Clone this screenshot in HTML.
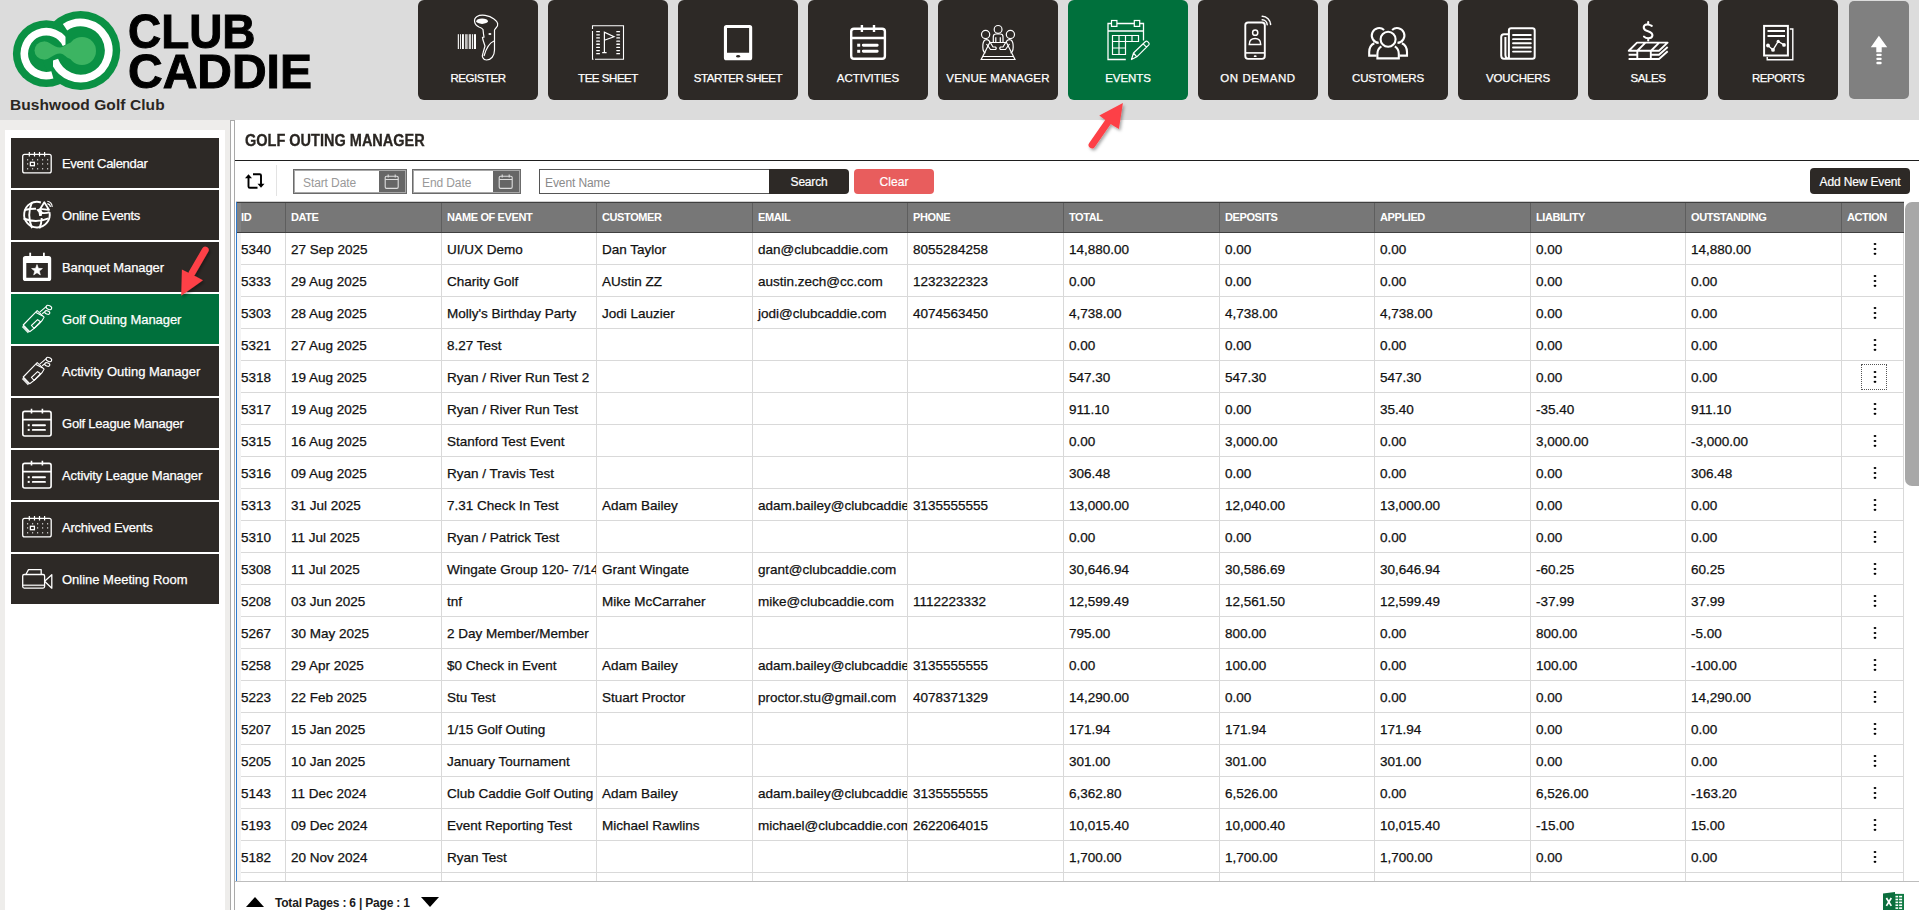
<!DOCTYPE html>
<html><head><meta charset="utf-8"><title>Golf Outing Manager</title>
<style>
*{box-sizing:border-box}
html,body{margin:0;padding:0}
body{width:1919px;height:910px;overflow:hidden;position:relative;background:#fff;font-family:"Liberation Sans",sans-serif;color:#000}
.a{position:absolute}
#hdr{left:0;top:0;width:1919px;height:120px;background:#dcdcdc}
.nb{position:absolute;top:0;width:120px;height:100px;background:#2d2926;border-radius:6px;color:#fff}
.nb.on{background:#00703c}
.nb .lb{position:absolute;left:0;right:0;top:70px;-webkit-text-stroke:0.25px #fff;text-align:center;font-size:11.5px;line-height:16px;letter-spacing:-0.45px;white-space:nowrap}
.nb svg{position:absolute;left:0;top:0}
#side{left:0;top:120px;width:230px;height:790px;background:#eeedeb}
#sidep{left:5px;top:130px;width:220px;height:780px;background:#fff}
.si{position:absolute;left:11px;width:208px;height:50px;background:#2d2926;color:#fff}
.si.on{background:#00703c}
.si .lb{position:absolute;left:51px;top:17px;-webkit-text-stroke:0.25px #fff;font-size:13px;line-height:18px;letter-spacing:-0.3px;white-space:nowrap}
.si svg{position:absolute;left:0;top:0}
.hc{position:absolute;top:203px;height:29px;color:#fff;font-weight:bold;font-size:11px;line-height:29px;padding-left:5px;letter-spacing:-0.4px;border-left:1px solid #5e5e5e;white-space:nowrap;overflow:hidden}
.rw{position:absolute;left:236px;width:1668px;height:32px;border-bottom:1px solid #d9d9d9}
.c{position:absolute;top:0;height:31px;line-height:33px;font-size:13.5px;padding-left:5px;-webkit-text-stroke:0.25px #111;border-left:1px solid #d9d9d9;white-space:nowrap;overflow:hidden;color:#111}
</style></head><body>

<div id="hdr" class="a">
<svg class="a" style="left:0;top:0" width="125" height="95" viewBox="0 0 125 95"><circle cx="46.3" cy="53.7" r="33.4" fill="#0a9144"/><circle cx="80.7" cy="50.5" r="39.5" fill="#0a9144"/><defs><clipPath id="cl"><rect x="0" y="0" width="65.5" height="95"/></clipPath><clipPath id="cr"><rect x="53" y="0" width="80" height="95"/></clipPath></defs><path clip-path="url(#cl)" d="M52.36 74.85 A22 22 0 1 1 66.24 44.40" fill="none" stroke="#fff" stroke-width="7.6"/><path clip-path="url(#cr)" d="M65.04 27.29 A28 28 0 1 1 54.39 60.08" fill="none" stroke="#fff" stroke-width="7.8"/><circle cx="43.5" cy="50.5" r="9" fill="#3cb462"/><circle cx="82" cy="51" r="14" fill="#3cb462"/><path d="M44 41.6 C50 41 53 47.5 60 47.5 C64 47.5 67 43 72 42.5 L72 59.5 C67 59 64 53.5 60 53.5 C53 53.5 50 60 44 59.4 Z" fill="#3cb462"/></svg>
<div class="a" style="left:127.5px;top:6px;font-weight:bold;font-size:48.5px;line-height:50px;color:#000;transform:scaleX(0.946);transform-origin:0 0;-webkit-text-stroke:1px #000">CLUB</div>
<div class="a" style="left:128px;top:46px;font-weight:bold;font-size:48.5px;line-height:50px;color:#000;transform:scaleX(0.989);transform-origin:0 0;-webkit-text-stroke:1px #000">CADDIE</div>
<div class="a" style="left:10px;top:96px;font-weight:bold;font-size:15.5px;line-height:18px;color:#2a2622;letter-spacing:0.08px">Bushwood Golf Club</div>
<div class="nb" style="left:418px"><svg width="120" height="100" viewBox="0 0 120 100" style=""><rect x="39.8" y="34.2" width="1.1" height="14.8" fill="#fff"/><rect x="42" y="34.2" width="0.9" height="14.8" fill="#fff"/><rect x="44" y="34.2" width="1.9" height="14.8" fill="#fff"/><rect x="47" y="34.2" width="2.7" height="14.8" fill="#fff" opacity=".7"/><rect x="50.7" y="34.2" width="2.4" height="14.8" fill="#fff" opacity=".8"/><rect x="54" y="34.2" width="0.9" height="14.8" fill="#fff"/><rect x="55.9" y="34.2" width="2.1" height="14.8" fill="#fff"/><path d="M61 27 C56 25 55 19 59 16.5 C63 14 71 15 76 19 C80 22 81 25 78 28 L76.5 30 L76.5 50 C76.5 56 73 60 68.5 60 C65 60 63.5 56.5 65 53 L67 46 L65 40 L64.5 37.5 L66 37 L65.5 34 L65 29.5 C64 28 62.5 27.5 61 27 Z" fill="none" stroke="#fff" stroke-width="1.2"/><path d="M76 41 C71 43 68 49 66 56" fill="none" stroke="#fff" stroke-width="1.2"/><ellipse cx="64.1" cy="21.2" rx="5.8" ry="2.7" fill="#fff"/><ellipse cx="71.9" cy="33.9" rx="1.5" ry="1" fill="#fff"/></svg><div class="lb" style="letter-spacing:-0.45px">REGISTER</div></div>
<div class="nb" style="left:548px"><svg width="120" height="100" viewBox="0 0 120 100" style=""><path d="M44.5 29 L44.5 25.7 L75.5 25.7 L75.5 59.3 L47 59.3 M44.5 31 L44.5 59.3 L45.5 59.3" fill="none" stroke="#fff" stroke-width="1.1"/><rect x="48.1" y="31.00" width="3.9" height="1.3" rx=".6" fill="#fff"/><rect x="68.2" y="31.00" width="3.9" height="1.3" rx=".6" fill="#fff"/><rect x="48.1" y="34.15" width="3.9" height="1.3" rx=".6" fill="#fff"/><rect x="68.2" y="34.15" width="3.9" height="1.3" rx=".6" fill="#fff"/><rect x="48.1" y="37.30" width="3.9" height="1.3" rx=".6" fill="#fff"/><rect x="68.2" y="37.30" width="3.9" height="1.3" rx=".6" fill="#fff"/><rect x="48.1" y="40.45" width="3.9" height="1.3" rx=".6" fill="#fff"/><rect x="68.2" y="40.45" width="3.9" height="1.3" rx=".6" fill="#fff"/><rect x="48.1" y="43.60" width="3.9" height="1.3" rx=".6" fill="#fff"/><rect x="68.2" y="43.60" width="3.9" height="1.3" rx=".6" fill="#fff"/><rect x="48.1" y="46.75" width="3.9" height="1.3" rx=".6" fill="#fff"/><rect x="68.2" y="46.75" width="3.9" height="1.3" rx=".6" fill="#fff"/><rect x="48.1" y="49.90" width="3.9" height="1.3" rx=".6" fill="#fff"/><rect x="68.2" y="49.90" width="3.9" height="1.3" rx=".6" fill="#fff"/><rect x="48.1" y="53.05" width="3.9" height="1.3" rx=".6" fill="#fff"/><rect x="68.2" y="53.05" width="3.9" height="1.3" rx=".6" fill="#fff"/><path d="M56.4 52.6 L56.4 32.3 L66 36.7 L56.4 40.3 M54.2 52.6 L58.6 52.6" fill="none" stroke="#fff" stroke-width="1.2"/></svg><div class="lb" style="letter-spacing:-0.45px">TEE SHEET</div></div>
<div class="nb" style="left:678px"><svg width="120" height="100" viewBox="0 0 120 100" style=""><path fill="#fff" fill-rule="evenodd" d="M48.5 24.9 H71.6 A2.6 2.6 0 0 1 74.2 27.5 V57.7 A2.6 2.6 0 0 1 71.6 60.3 H48.5 A2.6 2.6 0 0 1 45.9 57.7 V27.5 A2.6 2.6 0 0 1 48.5 24.9 Z M49 27.9 V52.8 H71.1 V27.9 Z"/><ellipse cx="60.1" cy="56.3" rx="2" ry="1.2" fill="#2d2926"/></svg><div class="lb" style="letter-spacing:-0.45px">STARTER SHEET</div></div>
<div class="nb" style="left:808px"><svg width="120" height="100" viewBox="0 0 120 100" style=""><rect x="43.2" y="28.8" width="33.7" height="30" rx="2.8" fill="none" stroke="#fff" stroke-width="2.4"/><path d="M43.2 38 H76.9 M53.9 25 V32 M66 25 V32" fill="none" stroke="#fff" stroke-width="2.4"/><rect x="49.2" y="43.7" width="3" height="3" fill="#fff"/><rect x="49.2" y="49.8" width="3" height="3" fill="#fff"/><path d="M55.3 45.2 H69.2 M55.3 51.3 H69.2" fill="none" stroke="#fff" stroke-width="2.9" stroke-linecap="round"/></svg><div class="lb" style="letter-spacing:-0.03px">ACTIVITIES</div></div>
<div class="nb" style="left:938px"><svg width="120" height="100" viewBox="0 0 120 100" style=""><g fill="none" stroke="#fff" stroke-width="1.2"><circle cx="60.1" cy="29.4" r="3.9"/><circle cx="47.6" cy="34.5" r="4.1"/><circle cx="72.4" cy="34.5" r="4.1"/><path d="M55.3 42.5 V36.8 Q55.3 34 58 34 H62.3 Q65 34 65 36.8 V42.5 M57.8 42.5 V37.3 M62.3 42.5 V37.3"/><path d="M51.7 42.5 H68.5 L77 59.5 H43.2 Z M44.4 56.5 H75.6"/><path d="M47.5 53 C44 52 44 42 47 40 C49 39 51 40 52 42 L55 47 H57.5 Q59 48.3 57.5 49.5 H52.5 L48.5 44"/><path d="M72.5 53 C76 52 76 42 73 40 C71 39 69 40 68 42 L65 47 H62.5 Q61 48.3 62.5 49.5 H67.5 L71.5 44"/></g></svg><div class="lb" style="letter-spacing:0.19px">VENUE MANAGER</div></div>
<div class="nb on" style="left:1068px"><svg width="120" height="100" viewBox="0 0 120 100" style=""><path d="M57.8 59.5 H40 V23.5 H75.5 V40.5 M40 31 H75.5" fill="none" stroke="#fff" stroke-width="1.3"/><rect x="43.5" y="20.5" width="5.4" height="5.9" fill="#00703c" stroke="#fff" stroke-width="1.2"/><rect x="66.3" y="20.5" width="5.4" height="5.9" fill="#00703c" stroke="#fff" stroke-width="1.2"/><path d="M44.5 35.5 H70.5 V41.5 H44.5 Z M44.5 41.5 V54.5 H57.5 V41.5 M51 35.5 V54.5 M57.5 35.5 V41.5 M64 35.5 V41.5 M44.5 48 H57.5" fill="none" stroke="#fff" stroke-width="1.2"/><path d="M63.5 59.5 L65.5 53 L77.5 41.5 Q78.5 40.7 79.6 41.6 L80.8 42.8 Q81.6 43.8 80.8 44.8 L68.8 56.8 Z M65.5 53 L68.8 56.8 M75.2 43.8 L78.5 47.2" fill="none" stroke="#fff" stroke-width="1.2" stroke-linejoin="round"/></svg><div class="lb" style="letter-spacing:-0.05px">EVENTS</div></div>
<div class="nb" style="left:1198px"><svg width="120" height="100" viewBox="0 0 120 100" style=""><rect x="47.3" y="22.5" width="19.5" height="36.4" rx="2.8" fill="none" stroke="#fff" stroke-width="1.9"/><path d="M47.3 52.9 H66.8" fill="none" stroke="#fff" stroke-width="1.6"/><ellipse cx="57.2" cy="56.2" rx="1.5" ry=".9" fill="#fff"/><circle cx="57.2" cy="32.7" r="2.6" fill="none" stroke="#fff" stroke-width="1.5"/><path d="M51.3 44.4 Q51.3 38.6 57.1 38.6 Q62.7 38.6 62.7 44.4 Z" fill="none" stroke="#fff" stroke-width="1.5"/><path d="M64.2 16.2 A8.7 8.7 0 0 1 72.6 24.5 M64.2 19.8 A5.2 5.2 0 0 1 69.2 24.8" fill="none" stroke="#fff" stroke-width="1.5" stroke-linecap="round"/></svg><div class="lb" style="letter-spacing:0.56px">ON DEMAND</div></div>
<div class="nb" style="left:1328px"><svg width="120" height="100" viewBox="0 0 120 100" style=""><g fill="none" stroke="#fff" stroke-width="2.1"><path d="M50.68 42.88 A7.4 7.4 0 1 1 56.08 29.94"/><path d="M69.52 42.88 A7.4 7.4 0 1 0 64.12 29.94"/><path d="M46.3 43.2 C42.5 45 41.2 48.5 41.2 52 V55.6 H48.6"/><path d="M73.9 43.2 C77.7 45 79 48.5 79 52 V55.6 H71.6"/><circle cx="60.1" cy="39.2" r="7.5"/><path d="M53.4 46.3 C50.5 48 49.4 51 49.4 54 V58.4 H70.8 V54 C70.8 51 69.7 48 66.8 46.3"/></g></svg><div class="lb" style="letter-spacing:-0.15px">CUSTOMERS</div></div>
<div class="nb" style="left:1458px"><svg width="120" height="100" viewBox="0 0 120 100" style=""><path d="M50.9 58.7 V30.5 Q50.9 28.2 53.2 28.2 H74.4 Q76.7 28.2 76.7 30.5 V56.4 Q76.7 58.7 74.4 58.7 H46 Q43.2 58.7 43.2 55.5 V37 Q43.2 34.2 46 34.2 H50.9 M50.9 58.7 Q47.6 58.7 47.4 55 V37" fill="none" stroke="#fff" stroke-width="2"/><path d="M55 35.00 H72.8" fill="none" stroke="#fff" stroke-width="1.9" stroke-linecap="round"/><path d="M55 39.15 H72.8" fill="none" stroke="#fff" stroke-width="1.9" stroke-linecap="round"/><path d="M55 43.30 H72.8" fill="none" stroke="#fff" stroke-width="1.9" stroke-linecap="round"/><path d="M55 47.45 H72.8" fill="none" stroke="#fff" stroke-width="1.9" stroke-linecap="round"/><path d="M55 51.60 H72.8" fill="none" stroke="#fff" stroke-width="1.9" stroke-linecap="round"/></svg><div class="lb" style="letter-spacing:-0.16px">VOUCHERS</div></div>
<div class="nb" style="left:1588px"><svg width="120" height="100" viewBox="0 0 120 100" style=""><path d="M63.8 25.8 Q60.8 24 58 24.6 Q55.5 25.4 55.8 28 Q56.3 30.2 60 31.2 Q64.7 32.6 64.4 35.6 Q64 38.2 60.3 38.3 Q57.6 38.3 56 36.6 M60.2 22 V24.4 M60.2 38.3 V40.5" fill="none" stroke="#fff" stroke-width="2.1" stroke-linecap="round"/><path d="M49 42.6 H79.6 L71 50.7 H40.8 Z M40.8 50.7 V51.5 M57.5 42.6 L49.3 50.7 M71.2 42.6 L63 50.7" fill="none" stroke="#fff" stroke-width="1.9" stroke-linejoin="round"/><path d="M40.6 54.8 H49.3 M62.8 54.8 H71 L79.7 47 M40.6 59 H71 L79.7 51.2 M49.3 50.7 V59 M62.8 50.7 V59" fill="none" stroke="#fff" stroke-width="1.9"/></svg><div class="lb" style="letter-spacing:-0.45px">SALES</div></div>
<div class="nb" style="left:1718px"><svg width="120" height="100" viewBox="0 0 120 100" style=""><rect x="46.1" y="25.9" width="23.8" height="29.6" fill="none" stroke="#fff" stroke-width="2"/><path d="M71.8 29 H74.8 V59.8 H49.2 V57" fill="none" stroke="#fff" stroke-width="1.4"/><path d="M49.5 31 H67 M49.5 36 H67" fill="none" stroke="#fff" stroke-width="2"/><path d="M50 45.5 L55 49.9 L60.2 41.4 L66 44.9" fill="none" stroke="#fff" stroke-width="1.3"/><circle cx="50" cy="45.5" r="1.9" fill="#fff"/><circle cx="55" cy="49.9" r="1.9" fill="#fff"/><circle cx="60.2" cy="41.4" r="1.6" fill="#fff"/><circle cx="66" cy="44.9" r="1.9" fill="#fff"/></svg><div class="lb" style="letter-spacing:-0.45px">REPORTS</div></div>
<div class="a" style="left:1849px;top:1px;width:60px;height:98px;background:#808080;border-radius:5px"><svg class="a" style="left:0;top:0" width="60" height="98" viewBox="0 0 60 98"><path d="M29.9 34.7 L38.2 46.3 H32.7 V51.2 H27.3 V46.3 H21.8 Z" fill="#fff"/><rect x="27.3" y="52.8" width="5.4" height="2.2" rx="1" fill="#fff"/><rect x="27.3" y="56.8" width="5.4" height="2.2" rx="1" fill="#fff"/><rect x="27.3" y="60.8" width="5.4" height="2.4" rx="1.2" fill="#fff"/></svg></div>
</div>
<div id="side" class="a"></div><div id="sidep" class="a"></div>
<div class="si" style="top:138px"><svg width="50" height="50" viewBox="0 0 50 50" style=""><rect x="11.7" y="16.3" width="28.5" height="18.6" rx="2" fill="none" stroke="#fff" stroke-width="1.3"/><path d="M18.3 14 V18.5 M23.5 14 V18.5 M28.5 14 V18.5 M33.6 14 V18.5" fill="none" stroke="#fff" stroke-width="1.2"/><rect x="16.0" y="21.2" width="1.2" height="1.2" fill="#fff" opacity=".85"/><rect x="21.0" y="21.2" width="1.2" height="1.2" fill="#fff" opacity=".85"/><rect x="26.0" y="21.2" width="1.2" height="1.2" fill="#fff" opacity=".85"/><rect x="31.0" y="21.2" width="1.2" height="1.2" fill="#fff" opacity=".85"/><rect x="36.0" y="21.2" width="1.2" height="1.2" fill="#fff" opacity=".85"/><rect x="16.0" y="25.3" width="1.2" height="1.2" fill="#fff" opacity=".85"/><rect x="26.0" y="25.3" width="1.2" height="1.2" fill="#fff" opacity=".85"/><rect x="31.0" y="25.3" width="1.2" height="1.2" fill="#fff" opacity=".85"/><rect x="36.0" y="25.3" width="1.2" height="1.2" fill="#fff" opacity=".85"/><rect x="16.0" y="30.2" width="1.2" height="1.2" fill="#fff" opacity=".85"/><rect x="21.0" y="30.2" width="1.2" height="1.2" fill="#fff" opacity=".85"/><rect x="26.0" y="30.2" width="1.2" height="1.2" fill="#fff" opacity=".85"/><rect x="31.0" y="30.2" width="1.2" height="1.2" fill="#fff" opacity=".85"/><rect x="36.0" y="30.2" width="1.2" height="1.2" fill="#fff" opacity=".85"/><rect x="19.4" y="24.3" width="4" height="3.4" fill="none" stroke="#fff" stroke-width="1.3"/></svg><div class="lb" style="letter-spacing:-0.3px">Event Calendar</div></div>
<div class="si" style="top:190px"><svg width="50" height="50" viewBox="0 0 50 50" style=""><g fill="none" stroke="#fff" stroke-width="1.9"><path d="M29.9 12.5 A12.8 12.8 0 1 0 38.5 22.2"/><path d="M21 12.2 Q15.5 25 21 38.2 M30.7 28 Q30.5 34 28.4 38.3 M13.8 20 Q19 18.6 25 18.8 M12.5 28.5 Q25 33.5 37.5 28.3 M31 23 Q35 23.5 38.6 22.2"/></g><path d="M33.3 12.3 L29.3 18.8 L38 19.8 Z" fill="none" stroke="#fff" stroke-width="1.8" stroke-linejoin="round"/><path d="M25.2 19.4 L29.6 18.3 L31.6 22.3 L30.6 25.9 L28.2 25.9 L27.6 22.4 Z" fill="#fff"/><path d="M36.3 13.6 A3.6 3.6 0 0 1 39.4 17 M36.3 11.3 A6 6 0 0 1 41.2 17" fill="none" stroke="#fff" stroke-width="1.1"/></svg><div class="lb" style="letter-spacing:-0.22px">Online Events</div></div>
<div class="si" style="top:242px"><svg width="50" height="50" viewBox="0 0 50 50" style=""><path fill="#fff" fill-rule="evenodd" d="M14.5 14 H37.6 Q40.2 14 40.2 16.6 V36.4 Q40.2 39 37.6 39 H14.5 Q11.9 39 11.9 36.4 V16.6 Q11.9 14 14.5 14 Z M15.3 21.1 V35.7 H36.9 V21.1 Z"/><rect x="18.3" y="10.7" width="1.8" height="4" fill="#fff"/><rect x="32" y="10.7" width="1.8" height="4" fill="#fff"/><path d="M26.00 22.60 L27.41 26.36 L31.42 26.54 L28.28 29.04 L29.35 32.91 L26.00 30.70 L22.65 32.91 L23.72 29.04 L20.58 26.54 L24.59 26.36 Z" fill="#fff" stroke="#fff" stroke-width=".6" stroke-linejoin="round"/></svg><div class="lb" style="letter-spacing:-0.09px">Banquet Manager</div></div>
<div class="si on" style="top:294px"><svg width="50" height="50" viewBox="0 0 50 50" style=""><g fill="none" stroke="#fff" stroke-width="1.1" stroke-linejoin="round"><path d="M12.2 31 L26.2 16.6 L33.1 23.1 C31 28 24 34 18.7 37.7 Z"/><path d="M20.4 31.5 L26.6 25.6 L29.5 27.7 L23.1 34.4 Z"/><path d="M25 18.5 L31.6 21.9 M28.7 18.1 L35.2 12.6 M31.2 19.8 L34 17.6"/><ellipse cx="37.9" cy="13.5" rx="2.9" ry="1.9" transform="rotate(25 37.9 13.5)"/><ellipse cx="36.3" cy="18.5" rx="2.6" ry="1.7" transform="rotate(20 36.3 18.5)"/></g><path d="M11.6 32.3 L17.6 38.4" fill="none" stroke="#fff" stroke-width="2.2" opacity=".85"/></svg><div class="lb" style="letter-spacing:-0.07px">Golf Outing Manager</div></div>
<div class="si" style="top:346px"><svg width="50" height="50" viewBox="0 0 50 50" style=""><g fill="none" stroke="#fff" stroke-width="1.1" stroke-linejoin="round"><path d="M12.2 31 L26.2 16.6 L33.1 23.1 C31 28 24 34 18.7 37.7 Z"/><path d="M20.4 31.5 L26.6 25.6 L29.5 27.7 L23.1 34.4 Z"/><path d="M25 18.5 L31.6 21.9 M28.7 18.1 L35.2 12.6 M31.2 19.8 L34 17.6"/><ellipse cx="37.9" cy="13.5" rx="2.9" ry="1.9" transform="rotate(25 37.9 13.5)"/><ellipse cx="36.3" cy="18.5" rx="2.6" ry="1.7" transform="rotate(20 36.3 18.5)"/></g><path d="M11.6 32.3 L17.6 38.4" fill="none" stroke="#fff" stroke-width="2.2" opacity=".85"/></svg><div class="lb" style="letter-spacing:0.02px">Activity Outing Manager</div></div>
<div class="si" style="top:398px"><svg width="50" height="50" viewBox="0 0 50 50" style=""><rect x="11.8" y="13.4" width="28.3" height="24.6" rx="2" fill="none" stroke="#fff" stroke-width="1.6"/><path d="M11.8 21.6 H40.1 M20.5 10.8 V15.5 M31.4 10.8 V15.5" fill="none" stroke="#fff" stroke-width="1.6"/><rect x="16.7" y="26.2" width="2" height="2" fill="#fff"/><rect x="16.7" y="30.9" width="2" height="2" fill="#fff"/><path d="M21.8 27.2 H34 M21.8 31.9 H34" fill="none" stroke="#fff" stroke-width="1.9" stroke-linecap="round"/></svg><div class="lb" style="letter-spacing:-0.22px">Golf League Manager</div></div>
<div class="si" style="top:450px"><svg width="50" height="50" viewBox="0 0 50 50" style=""><rect x="11.8" y="13.4" width="28.3" height="24.6" rx="2" fill="none" stroke="#fff" stroke-width="1.6"/><path d="M11.8 21.6 H40.1 M20.5 10.8 V15.5 M31.4 10.8 V15.5" fill="none" stroke="#fff" stroke-width="1.6"/><rect x="16.7" y="26.2" width="2" height="2" fill="#fff"/><rect x="16.7" y="30.9" width="2" height="2" fill="#fff"/><path d="M21.8 27.2 H34 M21.8 31.9 H34" fill="none" stroke="#fff" stroke-width="1.9" stroke-linecap="round"/></svg><div class="lb" style="letter-spacing:-0.13px">Activity League Manager</div></div>
<div class="si" style="top:502px"><svg width="50" height="50" viewBox="0 0 50 50" style=""><rect x="11.7" y="16.3" width="28.5" height="18.6" rx="2" fill="none" stroke="#fff" stroke-width="1.3"/><path d="M18.3 14 V18.5 M23.5 14 V18.5 M28.5 14 V18.5 M33.6 14 V18.5" fill="none" stroke="#fff" stroke-width="1.2"/><rect x="16.0" y="21.2" width="1.2" height="1.2" fill="#fff" opacity=".85"/><rect x="21.0" y="21.2" width="1.2" height="1.2" fill="#fff" opacity=".85"/><rect x="26.0" y="21.2" width="1.2" height="1.2" fill="#fff" opacity=".85"/><rect x="31.0" y="21.2" width="1.2" height="1.2" fill="#fff" opacity=".85"/><rect x="36.0" y="21.2" width="1.2" height="1.2" fill="#fff" opacity=".85"/><rect x="16.0" y="25.3" width="1.2" height="1.2" fill="#fff" opacity=".85"/><rect x="26.0" y="25.3" width="1.2" height="1.2" fill="#fff" opacity=".85"/><rect x="31.0" y="25.3" width="1.2" height="1.2" fill="#fff" opacity=".85"/><rect x="36.0" y="25.3" width="1.2" height="1.2" fill="#fff" opacity=".85"/><rect x="16.0" y="30.2" width="1.2" height="1.2" fill="#fff" opacity=".85"/><rect x="21.0" y="30.2" width="1.2" height="1.2" fill="#fff" opacity=".85"/><rect x="26.0" y="30.2" width="1.2" height="1.2" fill="#fff" opacity=".85"/><rect x="31.0" y="30.2" width="1.2" height="1.2" fill="#fff" opacity=".85"/><rect x="36.0" y="30.2" width="1.2" height="1.2" fill="#fff" opacity=".85"/><rect x="19.4" y="24.3" width="4" height="3.4" fill="none" stroke="#fff" stroke-width="1.3"/></svg><div class="lb" style="letter-spacing:-0.23px">Archived Events</div></div>
<div class="si" style="top:554px"><svg width="50" height="50" viewBox="0 0 50 50" style=""><g fill="none" stroke="#fff" stroke-width="1.3" stroke-linejoin="round"><path d="M15 20.2 L17.5 15.6 H30.2 V20.2"/><rect x="11.7" y="20.5" width="21.9" height="13.6" rx="1.5"/><path d="M33.6 27.2 L40.8 20.8 V34.2 Z"/></g><rect x="12" y="30.5" width="21.3" height="1.6" fill="#fff" opacity=".8"/></svg><div class="lb" style="letter-spacing:-0.01px">Online Meeting Room</div></div>
<div class="a" style="left:230px;top:120px;width:5px;height:790px;background:#fff;border-left:1px solid #a9a9a9;border-right:1px solid #a9a9a9;border-top:1px solid #a9a9a9"></div>
<div class="a" style="left:245px;top:131px;font-weight:bold;font-size:16px;line-height:20px;color:#2a2622;-webkit-text-stroke:0.3px #2a2622;transform:scaleX(0.907);transform-origin:0 0;white-space:nowrap">GOLF OUTING MANAGER</div>
<div class="a" style="left:235px;top:160px;width:1684px;height:1px;background:#1e1e1e"></div>
<svg class="a" style="left:244px;top:172px" width="22" height="18" viewBox="0 0 22 18"><path d="M4.5 6 V14.5 Q4.5 15.8 5.8 15.8 H13.5 M17 12 V3.5 Q17 2.2 15.7 2.2 H9" fill="none" stroke="#000" stroke-width="1.9"/><path d="M1 6.3 L4.5 2.3 L8 6.3 Z M13.5 11.8 L20.5 11.8 L17 15.8 Z" fill="#000"/></svg>
<div class="a" style="left:276px;top:165px;width:1px;height:31px;background:#e3e3e3"></div>
<div class="a" style="left:293px;top:169px;width:114px;height:25px;border:1px solid #6b6b6b;box-shadow:inset 0 0 0 1px #a8a8a8;background:#fff"><div class="a" style="left:9px;top:5px;font-size:12px;line-height:16px;color:#999;letter-spacing:-0.1px">Start Date</div><div class="a" style="right:1px;top:1px;width:26px;height:21px;background:#666"><svg class="a" style="left:4px;top:2px" width="18" height="18" viewBox="0 0 18 18"><rect x="2.2" y="3.2" width="13" height="12.2" rx="1.3" fill="none" stroke="#ddd" stroke-width="1.1"/><path d="M2.2 6.5 H15.2 M5.2 1.6 V4.6 M12.2 1.6 V4.6" fill="none" stroke="#ddd" stroke-width="1.1"/></svg></div></div>
<div class="a" style="left:412px;top:169px;width:109px;height:25px;border:1px solid #6b6b6b;box-shadow:inset 0 0 0 1px #a8a8a8;background:#fff"><div class="a" style="left:9px;top:5px;font-size:12px;line-height:16px;color:#999;letter-spacing:-0.1px">End Date</div><div class="a" style="right:1px;top:1px;width:26px;height:21px;background:#666"><svg class="a" style="left:4px;top:2px" width="18" height="18" viewBox="0 0 18 18"><rect x="2.2" y="3.2" width="13" height="12.2" rx="1.3" fill="none" stroke="#ddd" stroke-width="1.1"/><path d="M2.2 6.5 H15.2 M5.2 1.6 V4.6 M12.2 1.6 V4.6" fill="none" stroke="#ddd" stroke-width="1.1"/></svg></div></div>
<div class="a" style="left:539px;top:169px;width:231px;height:25px;border:1px solid #555;background:#fff"><div class="a" style="left:5px;top:5px;font-size:12px;line-height:16px;color:#8a8a8a;letter-spacing:-0.1px">Event Name</div></div>
<div class="a" style="left:769px;top:169px;width:80px;height:25px;background:#2d2926;border-radius:0 4px 4px 0;color:#fff;font-size:12px;line-height:27px;text-align:center;letter-spacing:-0.2px;-webkit-text-stroke:0.2px #fff">Search</div>
<div class="a" style="left:854px;top:169px;width:80px;height:25px;background:#e85d5d;border-radius:4px;color:#fff;font-size:12px;line-height:27px;text-align:center;letter-spacing:0.1px;-webkit-text-stroke:0.2px #fff">Clear</div>
<div class="a" style="left:1810px;top:168px;width:100px;height:26px;background:#2d2926;border-radius:4px;color:#fff;font-size:12px;line-height:28px;text-align:center;letter-spacing:-0.15px;-webkit-text-stroke:0.2px #fff">Add New Event</div>
<div class="a" style="left:236px;top:201px;width:1668px;height:1px;background:#cfcfcf"></div>
<div class="a" style="left:236px;top:202px;width:1668px;height:31px;background:#777;border-top:1px solid #3f3f3f;border-bottom:1px solid #3f3f3f"></div>
<div class="hc" style="left:236.0px;width:49.0px;border-left:none;">ID</div>
<div class="hc" style="left:285.0px;width:156.0px;">DATE</div>
<div class="hc" style="left:441.0px;width:155.0px;">NAME OF EVENT</div>
<div class="hc" style="left:596.0px;width:156.0px;">CUSTOMER</div>
<div class="hc" style="left:752.0px;width:155.0px;">EMAIL</div>
<div class="hc" style="left:907.0px;width:156.0px;">PHONE</div>
<div class="hc" style="left:1063.0px;width:156.0px;">TOTAL</div>
<div class="hc" style="left:1219.0px;width:155.0px;">DEPOSITS</div>
<div class="hc" style="left:1374.0px;width:156.0px;">APPLIED</div>
<div class="hc" style="left:1530.0px;width:155.0px;">LIABILITY</div>
<div class="hc" style="left:1685.0px;width:156.0px;">OUTSTANDING</div>
<div class="hc" style="left:1841.0px;width:63.0px;">ACTION</div>
<div class="rw" style="top:233px"><div class="c" style="left:0.0px;width:49.0px;border-left:none;">5340</div><div class="c" style="left:49.0px;width:156.0px;">27 Sep 2025</div><div class="c" style="left:205.0px;width:155.0px;">UI/UX Demo</div><div class="c" style="left:360.0px;width:156.0px;">Dan Taylor</div><div class="c" style="left:516.0px;width:155.0px;">dan@clubcaddie.com</div><div class="c" style="left:671.0px;width:156.0px;">8055284258</div><div class="c" style="left:827.0px;width:156.0px;">14,880.00</div><div class="c" style="left:983.0px;width:155.0px;">0.00</div><div class="c" style="left:1138.0px;width:156.0px;">0.00</div><div class="c" style="left:1294.0px;width:155.0px;">0.00</div><div class="c" style="left:1449.0px;width:156.0px;">14,880.00</div><div class="c" style="left:1605.0px;width:63.0px;"><svg style="position:absolute;left:31px;top:9px" width="4" height="14" viewBox="0 0 4 14"><ellipse cx="2" cy="2" rx="1.4" ry="1.1" fill="#000"/><ellipse cx="2" cy="7" rx="1.4" ry="1.1" fill="#000"/><ellipse cx="2" cy="11.8" rx="1.4" ry="1.1" fill="#000"/></svg></div></div>
<div class="rw" style="top:265px"><div class="c" style="left:0.0px;width:49.0px;border-left:none;">5333</div><div class="c" style="left:49.0px;width:156.0px;">29 Aug 2025</div><div class="c" style="left:205.0px;width:155.0px;">Charity Golf</div><div class="c" style="left:360.0px;width:156.0px;">AUstin ZZ</div><div class="c" style="left:516.0px;width:155.0px;">austin.zech@cc.com</div><div class="c" style="left:671.0px;width:156.0px;">1232322323</div><div class="c" style="left:827.0px;width:156.0px;">0.00</div><div class="c" style="left:983.0px;width:155.0px;">0.00</div><div class="c" style="left:1138.0px;width:156.0px;">0.00</div><div class="c" style="left:1294.0px;width:155.0px;">0.00</div><div class="c" style="left:1449.0px;width:156.0px;">0.00</div><div class="c" style="left:1605.0px;width:63.0px;"><svg style="position:absolute;left:31px;top:9px" width="4" height="14" viewBox="0 0 4 14"><ellipse cx="2" cy="2" rx="1.4" ry="1.1" fill="#000"/><ellipse cx="2" cy="7" rx="1.4" ry="1.1" fill="#000"/><ellipse cx="2" cy="11.8" rx="1.4" ry="1.1" fill="#000"/></svg></div></div>
<div class="rw" style="top:297px"><div class="c" style="left:0.0px;width:49.0px;border-left:none;">5303</div><div class="c" style="left:49.0px;width:156.0px;">28 Aug 2025</div><div class="c" style="left:205.0px;width:155.0px;">Molly&#x27;s Birthday Party</div><div class="c" style="left:360.0px;width:156.0px;">Jodi Lauzier</div><div class="c" style="left:516.0px;width:155.0px;">jodi@clubcaddie.com</div><div class="c" style="left:671.0px;width:156.0px;">4074563450</div><div class="c" style="left:827.0px;width:156.0px;">4,738.00</div><div class="c" style="left:983.0px;width:155.0px;">4,738.00</div><div class="c" style="left:1138.0px;width:156.0px;">4,738.00</div><div class="c" style="left:1294.0px;width:155.0px;">0.00</div><div class="c" style="left:1449.0px;width:156.0px;">0.00</div><div class="c" style="left:1605.0px;width:63.0px;"><svg style="position:absolute;left:31px;top:9px" width="4" height="14" viewBox="0 0 4 14"><ellipse cx="2" cy="2" rx="1.4" ry="1.1" fill="#000"/><ellipse cx="2" cy="7" rx="1.4" ry="1.1" fill="#000"/><ellipse cx="2" cy="11.8" rx="1.4" ry="1.1" fill="#000"/></svg></div></div>
<div class="rw" style="top:329px"><div class="c" style="left:0.0px;width:49.0px;border-left:none;">5321</div><div class="c" style="left:49.0px;width:156.0px;">27 Aug 2025</div><div class="c" style="left:205.0px;width:155.0px;">8.27 Test</div><div class="c" style="left:360.0px;width:156.0px;"></div><div class="c" style="left:516.0px;width:155.0px;"></div><div class="c" style="left:671.0px;width:156.0px;"></div><div class="c" style="left:827.0px;width:156.0px;">0.00</div><div class="c" style="left:983.0px;width:155.0px;">0.00</div><div class="c" style="left:1138.0px;width:156.0px;">0.00</div><div class="c" style="left:1294.0px;width:155.0px;">0.00</div><div class="c" style="left:1449.0px;width:156.0px;">0.00</div><div class="c" style="left:1605.0px;width:63.0px;"><svg style="position:absolute;left:31px;top:9px" width="4" height="14" viewBox="0 0 4 14"><ellipse cx="2" cy="2" rx="1.4" ry="1.1" fill="#000"/><ellipse cx="2" cy="7" rx="1.4" ry="1.1" fill="#000"/><ellipse cx="2" cy="11.8" rx="1.4" ry="1.1" fill="#000"/></svg></div></div>
<div class="rw" style="top:361px"><div class="c" style="left:0.0px;width:49.0px;border-left:none;">5318</div><div class="c" style="left:49.0px;width:156.0px;">19 Aug 2025</div><div class="c" style="left:205.0px;width:155.0px;">Ryan / River Run Test 2</div><div class="c" style="left:360.0px;width:156.0px;"></div><div class="c" style="left:516.0px;width:155.0px;"></div><div class="c" style="left:671.0px;width:156.0px;"></div><div class="c" style="left:827.0px;width:156.0px;">547.30</div><div class="c" style="left:983.0px;width:155.0px;">547.30</div><div class="c" style="left:1138.0px;width:156.0px;">547.30</div><div class="c" style="left:1294.0px;width:155.0px;">0.00</div><div class="c" style="left:1449.0px;width:156.0px;">0.00</div><div class="c" style="left:1605.0px;width:63.0px;"><svg style="position:absolute;left:31px;top:9px" width="4" height="14" viewBox="0 0 4 14"><ellipse cx="2" cy="2" rx="1.4" ry="1.1" fill="#000"/><ellipse cx="2" cy="7" rx="1.4" ry="1.1" fill="#000"/><ellipse cx="2" cy="11.8" rx="1.4" ry="1.1" fill="#000"/></svg></div></div>
<div class="rw" style="top:393px"><div class="c" style="left:0.0px;width:49.0px;border-left:none;">5317</div><div class="c" style="left:49.0px;width:156.0px;">19 Aug 2025</div><div class="c" style="left:205.0px;width:155.0px;">Ryan / River Run Test</div><div class="c" style="left:360.0px;width:156.0px;"></div><div class="c" style="left:516.0px;width:155.0px;"></div><div class="c" style="left:671.0px;width:156.0px;"></div><div class="c" style="left:827.0px;width:156.0px;">911.10</div><div class="c" style="left:983.0px;width:155.0px;">0.00</div><div class="c" style="left:1138.0px;width:156.0px;">35.40</div><div class="c" style="left:1294.0px;width:155.0px;">-35.40</div><div class="c" style="left:1449.0px;width:156.0px;">911.10</div><div class="c" style="left:1605.0px;width:63.0px;"><svg style="position:absolute;left:31px;top:9px" width="4" height="14" viewBox="0 0 4 14"><ellipse cx="2" cy="2" rx="1.4" ry="1.1" fill="#000"/><ellipse cx="2" cy="7" rx="1.4" ry="1.1" fill="#000"/><ellipse cx="2" cy="11.8" rx="1.4" ry="1.1" fill="#000"/></svg></div></div>
<div class="rw" style="top:425px"><div class="c" style="left:0.0px;width:49.0px;border-left:none;">5315</div><div class="c" style="left:49.0px;width:156.0px;">16 Aug 2025</div><div class="c" style="left:205.0px;width:155.0px;">Stanford Test Event</div><div class="c" style="left:360.0px;width:156.0px;"></div><div class="c" style="left:516.0px;width:155.0px;"></div><div class="c" style="left:671.0px;width:156.0px;"></div><div class="c" style="left:827.0px;width:156.0px;">0.00</div><div class="c" style="left:983.0px;width:155.0px;">3,000.00</div><div class="c" style="left:1138.0px;width:156.0px;">0.00</div><div class="c" style="left:1294.0px;width:155.0px;">3,000.00</div><div class="c" style="left:1449.0px;width:156.0px;">-3,000.00</div><div class="c" style="left:1605.0px;width:63.0px;"><svg style="position:absolute;left:31px;top:9px" width="4" height="14" viewBox="0 0 4 14"><ellipse cx="2" cy="2" rx="1.4" ry="1.1" fill="#000"/><ellipse cx="2" cy="7" rx="1.4" ry="1.1" fill="#000"/><ellipse cx="2" cy="11.8" rx="1.4" ry="1.1" fill="#000"/></svg></div></div>
<div class="rw" style="top:457px"><div class="c" style="left:0.0px;width:49.0px;border-left:none;">5316</div><div class="c" style="left:49.0px;width:156.0px;">09 Aug 2025</div><div class="c" style="left:205.0px;width:155.0px;">Ryan / Travis Test</div><div class="c" style="left:360.0px;width:156.0px;"></div><div class="c" style="left:516.0px;width:155.0px;"></div><div class="c" style="left:671.0px;width:156.0px;"></div><div class="c" style="left:827.0px;width:156.0px;">306.48</div><div class="c" style="left:983.0px;width:155.0px;">0.00</div><div class="c" style="left:1138.0px;width:156.0px;">0.00</div><div class="c" style="left:1294.0px;width:155.0px;">0.00</div><div class="c" style="left:1449.0px;width:156.0px;">306.48</div><div class="c" style="left:1605.0px;width:63.0px;"><svg style="position:absolute;left:31px;top:9px" width="4" height="14" viewBox="0 0 4 14"><ellipse cx="2" cy="2" rx="1.4" ry="1.1" fill="#000"/><ellipse cx="2" cy="7" rx="1.4" ry="1.1" fill="#000"/><ellipse cx="2" cy="11.8" rx="1.4" ry="1.1" fill="#000"/></svg></div></div>
<div class="rw" style="top:489px"><div class="c" style="left:0.0px;width:49.0px;border-left:none;">5313</div><div class="c" style="left:49.0px;width:156.0px;">31 Jul 2025</div><div class="c" style="left:205.0px;width:155.0px;">7.31 Check In Test</div><div class="c" style="left:360.0px;width:156.0px;">Adam Bailey</div><div class="c" style="left:516.0px;width:155.0px;">adam.bailey@clubcaddie.com</div><div class="c" style="left:671.0px;width:156.0px;">3135555555</div><div class="c" style="left:827.0px;width:156.0px;">13,000.00</div><div class="c" style="left:983.0px;width:155.0px;">12,040.00</div><div class="c" style="left:1138.0px;width:156.0px;">13,000.00</div><div class="c" style="left:1294.0px;width:155.0px;">0.00</div><div class="c" style="left:1449.0px;width:156.0px;">0.00</div><div class="c" style="left:1605.0px;width:63.0px;"><svg style="position:absolute;left:31px;top:9px" width="4" height="14" viewBox="0 0 4 14"><ellipse cx="2" cy="2" rx="1.4" ry="1.1" fill="#000"/><ellipse cx="2" cy="7" rx="1.4" ry="1.1" fill="#000"/><ellipse cx="2" cy="11.8" rx="1.4" ry="1.1" fill="#000"/></svg></div></div>
<div class="rw" style="top:521px"><div class="c" style="left:0.0px;width:49.0px;border-left:none;">5310</div><div class="c" style="left:49.0px;width:156.0px;">11 Jul 2025</div><div class="c" style="left:205.0px;width:155.0px;">Ryan / Patrick Test</div><div class="c" style="left:360.0px;width:156.0px;"></div><div class="c" style="left:516.0px;width:155.0px;"></div><div class="c" style="left:671.0px;width:156.0px;"></div><div class="c" style="left:827.0px;width:156.0px;">0.00</div><div class="c" style="left:983.0px;width:155.0px;">0.00</div><div class="c" style="left:1138.0px;width:156.0px;">0.00</div><div class="c" style="left:1294.0px;width:155.0px;">0.00</div><div class="c" style="left:1449.0px;width:156.0px;">0.00</div><div class="c" style="left:1605.0px;width:63.0px;"><svg style="position:absolute;left:31px;top:9px" width="4" height="14" viewBox="0 0 4 14"><ellipse cx="2" cy="2" rx="1.4" ry="1.1" fill="#000"/><ellipse cx="2" cy="7" rx="1.4" ry="1.1" fill="#000"/><ellipse cx="2" cy="11.8" rx="1.4" ry="1.1" fill="#000"/></svg></div></div>
<div class="rw" style="top:553px"><div class="c" style="left:0.0px;width:49.0px;border-left:none;">5308</div><div class="c" style="left:49.0px;width:156.0px;">11 Jul 2025</div><div class="c" style="left:205.0px;width:155.0px;">Wingate Group 120- 7/14</div><div class="c" style="left:360.0px;width:156.0px;">Grant Wingate</div><div class="c" style="left:516.0px;width:155.0px;">grant@clubcaddie.com</div><div class="c" style="left:671.0px;width:156.0px;"></div><div class="c" style="left:827.0px;width:156.0px;">30,646.94</div><div class="c" style="left:983.0px;width:155.0px;">30,586.69</div><div class="c" style="left:1138.0px;width:156.0px;">30,646.94</div><div class="c" style="left:1294.0px;width:155.0px;">-60.25</div><div class="c" style="left:1449.0px;width:156.0px;">60.25</div><div class="c" style="left:1605.0px;width:63.0px;"><svg style="position:absolute;left:31px;top:9px" width="4" height="14" viewBox="0 0 4 14"><ellipse cx="2" cy="2" rx="1.4" ry="1.1" fill="#000"/><ellipse cx="2" cy="7" rx="1.4" ry="1.1" fill="#000"/><ellipse cx="2" cy="11.8" rx="1.4" ry="1.1" fill="#000"/></svg></div></div>
<div class="rw" style="top:585px"><div class="c" style="left:0.0px;width:49.0px;border-left:none;">5208</div><div class="c" style="left:49.0px;width:156.0px;">03 Jun 2025</div><div class="c" style="left:205.0px;width:155.0px;">tnf</div><div class="c" style="left:360.0px;width:156.0px;">Mike McCarraher</div><div class="c" style="left:516.0px;width:155.0px;">mike@clubcaddie.com</div><div class="c" style="left:671.0px;width:156.0px;">1112223332</div><div class="c" style="left:827.0px;width:156.0px;">12,599.49</div><div class="c" style="left:983.0px;width:155.0px;">12,561.50</div><div class="c" style="left:1138.0px;width:156.0px;">12,599.49</div><div class="c" style="left:1294.0px;width:155.0px;">-37.99</div><div class="c" style="left:1449.0px;width:156.0px;">37.99</div><div class="c" style="left:1605.0px;width:63.0px;"><svg style="position:absolute;left:31px;top:9px" width="4" height="14" viewBox="0 0 4 14"><ellipse cx="2" cy="2" rx="1.4" ry="1.1" fill="#000"/><ellipse cx="2" cy="7" rx="1.4" ry="1.1" fill="#000"/><ellipse cx="2" cy="11.8" rx="1.4" ry="1.1" fill="#000"/></svg></div></div>
<div class="rw" style="top:617px"><div class="c" style="left:0.0px;width:49.0px;border-left:none;">5267</div><div class="c" style="left:49.0px;width:156.0px;">30 May 2025</div><div class="c" style="left:205.0px;width:155.0px;">2 Day Member/Member</div><div class="c" style="left:360.0px;width:156.0px;"></div><div class="c" style="left:516.0px;width:155.0px;"></div><div class="c" style="left:671.0px;width:156.0px;"></div><div class="c" style="left:827.0px;width:156.0px;">795.00</div><div class="c" style="left:983.0px;width:155.0px;">800.00</div><div class="c" style="left:1138.0px;width:156.0px;">0.00</div><div class="c" style="left:1294.0px;width:155.0px;">800.00</div><div class="c" style="left:1449.0px;width:156.0px;">-5.00</div><div class="c" style="left:1605.0px;width:63.0px;"><svg style="position:absolute;left:31px;top:9px" width="4" height="14" viewBox="0 0 4 14"><ellipse cx="2" cy="2" rx="1.4" ry="1.1" fill="#000"/><ellipse cx="2" cy="7" rx="1.4" ry="1.1" fill="#000"/><ellipse cx="2" cy="11.8" rx="1.4" ry="1.1" fill="#000"/></svg></div></div>
<div class="rw" style="top:649px"><div class="c" style="left:0.0px;width:49.0px;border-left:none;">5258</div><div class="c" style="left:49.0px;width:156.0px;">29 Apr 2025</div><div class="c" style="left:205.0px;width:155.0px;">$0 Check in Event</div><div class="c" style="left:360.0px;width:156.0px;">Adam Bailey</div><div class="c" style="left:516.0px;width:155.0px;">adam.bailey@clubcaddie.com</div><div class="c" style="left:671.0px;width:156.0px;">3135555555</div><div class="c" style="left:827.0px;width:156.0px;">0.00</div><div class="c" style="left:983.0px;width:155.0px;">100.00</div><div class="c" style="left:1138.0px;width:156.0px;">0.00</div><div class="c" style="left:1294.0px;width:155.0px;">100.00</div><div class="c" style="left:1449.0px;width:156.0px;">-100.00</div><div class="c" style="left:1605.0px;width:63.0px;"><svg style="position:absolute;left:31px;top:9px" width="4" height="14" viewBox="0 0 4 14"><ellipse cx="2" cy="2" rx="1.4" ry="1.1" fill="#000"/><ellipse cx="2" cy="7" rx="1.4" ry="1.1" fill="#000"/><ellipse cx="2" cy="11.8" rx="1.4" ry="1.1" fill="#000"/></svg></div></div>
<div class="rw" style="top:681px"><div class="c" style="left:0.0px;width:49.0px;border-left:none;">5223</div><div class="c" style="left:49.0px;width:156.0px;">22 Feb 2025</div><div class="c" style="left:205.0px;width:155.0px;">Stu Test</div><div class="c" style="left:360.0px;width:156.0px;">Stuart Proctor</div><div class="c" style="left:516.0px;width:155.0px;">proctor.stu@gmail.com</div><div class="c" style="left:671.0px;width:156.0px;">4078371329</div><div class="c" style="left:827.0px;width:156.0px;">14,290.00</div><div class="c" style="left:983.0px;width:155.0px;">0.00</div><div class="c" style="left:1138.0px;width:156.0px;">0.00</div><div class="c" style="left:1294.0px;width:155.0px;">0.00</div><div class="c" style="left:1449.0px;width:156.0px;">14,290.00</div><div class="c" style="left:1605.0px;width:63.0px;"><svg style="position:absolute;left:31px;top:9px" width="4" height="14" viewBox="0 0 4 14"><ellipse cx="2" cy="2" rx="1.4" ry="1.1" fill="#000"/><ellipse cx="2" cy="7" rx="1.4" ry="1.1" fill="#000"/><ellipse cx="2" cy="11.8" rx="1.4" ry="1.1" fill="#000"/></svg></div></div>
<div class="rw" style="top:713px"><div class="c" style="left:0.0px;width:49.0px;border-left:none;">5207</div><div class="c" style="left:49.0px;width:156.0px;">15 Jan 2025</div><div class="c" style="left:205.0px;width:155.0px;">1/15 Golf Outing</div><div class="c" style="left:360.0px;width:156.0px;"></div><div class="c" style="left:516.0px;width:155.0px;"></div><div class="c" style="left:671.0px;width:156.0px;"></div><div class="c" style="left:827.0px;width:156.0px;">171.94</div><div class="c" style="left:983.0px;width:155.0px;">171.94</div><div class="c" style="left:1138.0px;width:156.0px;">171.94</div><div class="c" style="left:1294.0px;width:155.0px;">0.00</div><div class="c" style="left:1449.0px;width:156.0px;">0.00</div><div class="c" style="left:1605.0px;width:63.0px;"><svg style="position:absolute;left:31px;top:9px" width="4" height="14" viewBox="0 0 4 14"><ellipse cx="2" cy="2" rx="1.4" ry="1.1" fill="#000"/><ellipse cx="2" cy="7" rx="1.4" ry="1.1" fill="#000"/><ellipse cx="2" cy="11.8" rx="1.4" ry="1.1" fill="#000"/></svg></div></div>
<div class="rw" style="top:745px"><div class="c" style="left:0.0px;width:49.0px;border-left:none;">5205</div><div class="c" style="left:49.0px;width:156.0px;">10 Jan 2025</div><div class="c" style="left:205.0px;width:155.0px;">January Tournament</div><div class="c" style="left:360.0px;width:156.0px;"></div><div class="c" style="left:516.0px;width:155.0px;"></div><div class="c" style="left:671.0px;width:156.0px;"></div><div class="c" style="left:827.0px;width:156.0px;">301.00</div><div class="c" style="left:983.0px;width:155.0px;">301.00</div><div class="c" style="left:1138.0px;width:156.0px;">301.00</div><div class="c" style="left:1294.0px;width:155.0px;">0.00</div><div class="c" style="left:1449.0px;width:156.0px;">0.00</div><div class="c" style="left:1605.0px;width:63.0px;"><svg style="position:absolute;left:31px;top:9px" width="4" height="14" viewBox="0 0 4 14"><ellipse cx="2" cy="2" rx="1.4" ry="1.1" fill="#000"/><ellipse cx="2" cy="7" rx="1.4" ry="1.1" fill="#000"/><ellipse cx="2" cy="11.8" rx="1.4" ry="1.1" fill="#000"/></svg></div></div>
<div class="rw" style="top:777px"><div class="c" style="left:0.0px;width:49.0px;border-left:none;">5143</div><div class="c" style="left:49.0px;width:156.0px;">11 Dec 2024</div><div class="c" style="left:205.0px;width:155.0px;">Club Caddie Golf Outing</div><div class="c" style="left:360.0px;width:156.0px;">Adam Bailey</div><div class="c" style="left:516.0px;width:155.0px;">adam.bailey@clubcaddie.com</div><div class="c" style="left:671.0px;width:156.0px;">3135555555</div><div class="c" style="left:827.0px;width:156.0px;">6,362.80</div><div class="c" style="left:983.0px;width:155.0px;">6,526.00</div><div class="c" style="left:1138.0px;width:156.0px;">0.00</div><div class="c" style="left:1294.0px;width:155.0px;">6,526.00</div><div class="c" style="left:1449.0px;width:156.0px;">-163.20</div><div class="c" style="left:1605.0px;width:63.0px;"><svg style="position:absolute;left:31px;top:9px" width="4" height="14" viewBox="0 0 4 14"><ellipse cx="2" cy="2" rx="1.4" ry="1.1" fill="#000"/><ellipse cx="2" cy="7" rx="1.4" ry="1.1" fill="#000"/><ellipse cx="2" cy="11.8" rx="1.4" ry="1.1" fill="#000"/></svg></div></div>
<div class="rw" style="top:809px"><div class="c" style="left:0.0px;width:49.0px;border-left:none;">5193</div><div class="c" style="left:49.0px;width:156.0px;">09 Dec 2024</div><div class="c" style="left:205.0px;width:155.0px;">Event Reporting Test</div><div class="c" style="left:360.0px;width:156.0px;">Michael Rawlins</div><div class="c" style="left:516.0px;width:155.0px;">michael@clubcaddie.com</div><div class="c" style="left:671.0px;width:156.0px;">2622064015</div><div class="c" style="left:827.0px;width:156.0px;">10,015.40</div><div class="c" style="left:983.0px;width:155.0px;">10,000.40</div><div class="c" style="left:1138.0px;width:156.0px;">10,015.40</div><div class="c" style="left:1294.0px;width:155.0px;">-15.00</div><div class="c" style="left:1449.0px;width:156.0px;">15.00</div><div class="c" style="left:1605.0px;width:63.0px;"><svg style="position:absolute;left:31px;top:9px" width="4" height="14" viewBox="0 0 4 14"><ellipse cx="2" cy="2" rx="1.4" ry="1.1" fill="#000"/><ellipse cx="2" cy="7" rx="1.4" ry="1.1" fill="#000"/><ellipse cx="2" cy="11.8" rx="1.4" ry="1.1" fill="#000"/></svg></div></div>
<div class="rw" style="top:841px"><div class="c" style="left:0.0px;width:49.0px;border-left:none;">5182</div><div class="c" style="left:49.0px;width:156.0px;">20 Nov 2024</div><div class="c" style="left:205.0px;width:155.0px;">Ryan Test</div><div class="c" style="left:360.0px;width:156.0px;"></div><div class="c" style="left:516.0px;width:155.0px;"></div><div class="c" style="left:671.0px;width:156.0px;"></div><div class="c" style="left:827.0px;width:156.0px;">1,700.00</div><div class="c" style="left:983.0px;width:155.0px;">1,700.00</div><div class="c" style="left:1138.0px;width:156.0px;">1,700.00</div><div class="c" style="left:1294.0px;width:155.0px;">0.00</div><div class="c" style="left:1449.0px;width:156.0px;">0.00</div><div class="c" style="left:1605.0px;width:63.0px;"><svg style="position:absolute;left:31px;top:9px" width="4" height="14" viewBox="0 0 4 14"><ellipse cx="2" cy="2" rx="1.4" ry="1.1" fill="#000"/><ellipse cx="2" cy="7" rx="1.4" ry="1.1" fill="#000"/><ellipse cx="2" cy="11.8" rx="1.4" ry="1.1" fill="#000"/></svg></div></div>
<div class="rw" style="top:873px"><div class="c" style="left:0.0px;width:49.0px;border-left:none;"></div><div class="c" style="left:49.0px;width:156.0px;"></div><div class="c" style="left:205.0px;width:155.0px;"></div><div class="c" style="left:360.0px;width:156.0px;"></div><div class="c" style="left:516.0px;width:155.0px;"></div><div class="c" style="left:671.0px;width:156.0px;"></div><div class="c" style="left:827.0px;width:156.0px;"></div><div class="c" style="left:983.0px;width:155.0px;"></div><div class="c" style="left:1138.0px;width:156.0px;"></div><div class="c" style="left:1294.0px;width:155.0px;"></div><div class="c" style="left:1449.0px;width:156.0px;"></div><div class="c" style="left:1605.0px;width:63.0px;"></div></div>
<div class="a" style="left:236px;top:202px;width:1px;height:679px;background:#2f7bd0"></div>
<div class="a" style="left:1903px;top:233px;width:1px;height:648px;background:#d9d9d9"></div>
<div class="a" style="left:237px;top:233px;width:4px;height:648px;background:#f3f3f3"></div>
<div class="a" style="left:237px;top:203px;width:4px;height:29px;background:#828282"></div>
<div class="a" style="left:235px;top:881px;width:1684px;height:29px;background:#fff;border-top:1px solid #bdbdbd"></div>
<div class="a" style="left:1904px;top:202px;width:15px;height:679px;background:#fff"></div>
<div class="a" style="left:1905px;top:202px;width:14px;height:284px;background:#a8a8a8;border-radius:7px 0 0 7px"></div>
<div class="a" style="left:1861px;top:364px;width:26px;height:26px;border:1px dotted #555"></div>
<svg class="a" style="left:246px;top:896px" width="20" height="12"><path d="M0 11 L9 1 L18 11 Z" fill="#000"/></svg>
<div class="a" style="left:275px;top:895px;font-weight:bold;font-size:12px;line-height:16px;color:#1a1a1a;letter-spacing:-0.2px">Total Pages : 6 | Page : 1</div>
<svg class="a" style="left:421px;top:896px" width="20" height="12"><path d="M0 1 L18 1 L9 11 Z" fill="#000"/></svg>
<svg class="a" style="left:1882px;top:891px" width="24" height="19" viewBox="0 0 24 19"><rect x="12.5" y="2.9" width="9.5" height="16.1" fill="#107a43"/><rect x="13.5" y="4.80" width="2.6" height="1.6" fill="#fff"/><rect x="17.1" y="4.80" width="3" height="1.6" fill="#fff"/><rect x="13.5" y="7.68" width="2.6" height="1.6" fill="#fff"/><rect x="17.1" y="7.68" width="3" height="1.6" fill="#fff"/><rect x="13.5" y="10.56" width="2.6" height="1.6" fill="#fff"/><rect x="17.1" y="10.56" width="3" height="1.6" fill="#fff"/><rect x="13.5" y="13.44" width="2.6" height="1.6" fill="#fff"/><rect x="17.1" y="13.44" width="3" height="1.6" fill="#fff"/><rect x="13.5" y="16.32" width="2.6" height="1.6" fill="#fff"/><rect x="17.1" y="16.32" width="3" height="1.6" fill="#fff"/><path d="M1 2.5 L13 0.9 V19 H1 Z" fill="#0b6e3d"/><path d="M4.4 7 L9.3 14.9 M9.3 7 L4.4 14.9" stroke="#fff" stroke-width="1.7"/></svg>
<svg class="a" style="left:0;top:0;overflow:visible" width="1919" height="910"><defs><filter id="sh" x="-50%" y="-50%" width="200%" height="200%"><feDropShadow dx="1.5" dy="2" stdDeviation="1.6" flood-color="#000" flood-opacity=".35"/></filter></defs><g filter="url(#sh)" fill="#fd4146"><path d="M1092 145 L1108 122" stroke="#fd4146" stroke-width="6.8" stroke-linecap="round"/><path d="M1122.9 103 L1099.3 115.4 L1104.6 119.6 L1112.1 125 L1118.9 128.9 Z"/></g><g filter="url(#sh)" fill="#fd4146"><path d="M205.3 250 L192 273" stroke="#fd4146" stroke-width="6.8" stroke-linecap="round"/><path d="M181.2 295.7 L181.9 269.4 L188.5 272.7 L196 276.6 L203 280.2 Z"/></g></svg>
</body></html>
